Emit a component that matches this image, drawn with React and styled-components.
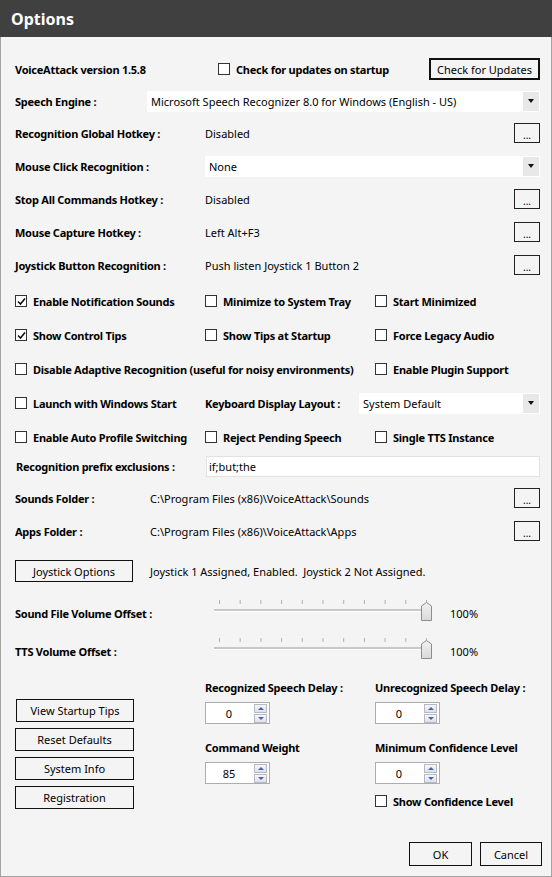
import styled, { createGlobalStyle } from "styled-components";

const GlobalStyle = createGlobalStyle`
  html, body {
    margin: 0;
    padding: 0;
    background: #f4f4f4;
  }
  body {
    font-family: "Noto Sans", "Open Sans", sans-serif;
    font-size: 11px;
    color: #000;
  }
`;

const Window = styled.div`
  width: 552px;
  height: 877px;
  display: flex;
  flex-direction: column;
  background: #f4f4f4;
`;

const TitleBar = styled.div`
  height: 37px;
  flex: none;
  background: #404040;
  color: #fff;
  font-weight: bold;
  font-size: 16px;
  padding-left: 11px;
  display: flex;
  align-items: center;
`;

const Body = styled.div`
  flex: 1;
  display: flex;
  flex-direction: column;
  border: 1px solid #a3a3a3;
  border-top: none;
  padding: 21px 11px 10px 14px;
`;

const Row = styled.div`
  display: flex;
  align-items: center;
  height: ${({ $h }) => $h || 22}px;
  margin-top: ${({ $mt }) => $mt || 0}px;
`;

const bold = `
  font-weight: bold;
  letter-spacing: -0.25px;
`;

const Label = styled.div`
  ${bold}
  width: ${({ $w }) => ($w ? `${$w}px` : "auto")};
  flex: none;
  white-space: nowrap;
`;

const Value = styled.div`
  flex: 1;
  white-space: nowrap;
`;

const Button = styled.button`
  font: inherit;
  height: ${({ $h }) => $h || 22}px;
  width: ${({ $w }) => ($w ? `${$w}px` : "auto")};
  padding: 0;
  white-space: nowrap;
  background: #f4f4f4;
  color: #000;
  border: ${({ $default }) => ($default ? "2px" : "1px")} solid #111;
  flex: none;
  cursor: default;
`;

const DotsButton = styled.button`
  width: 26px;
  height: 20px;
  flex: none;
  padding: 0;
  background: #f4f4f4;
  border: 1px solid #222;
  font: inherit;
  font-size: 10px;
  line-height: 22px;
  color: #000;
  display: flex;
  justify-content: center;
  align-items: flex-start;
  margin-left: auto;
`;

const Select = styled.div`
  flex: 1;
  height: 21px;
  background: #fff;
  display: flex;
  align-items: center;
`;

const SelectText = styled.span`
  flex: 1;
  padding-left: 4px;
  white-space: nowrap;
`;

const SelectArrow = styled.span`
  width: 16px;
  height: 19px;
  margin-right: 1px;
  background: #e8e8e8;
  display: flex;
  align-items: center;
  justify-content: center;
  &::after {
    content: "";
    border-left: 3px solid transparent;
    border-right: 3px solid transparent;
    border-top: 4px solid #111;
  }
`;

const Check = styled.label`
  display: flex;
  align-items: center;
  ${bold}
  white-space: nowrap;
  width: ${({ $w }) => ($w ? `${$w}px` : "auto")};
  flex: none;
`;

const Box = styled.span`
  width: 10px;
  height: 10px;
  border: 1px solid #333;
  background: #fff;
  margin-right: 6px;
  flex: none;
  display: flex;
  align-items: center;
  justify-content: center;
`;

const TextInput = styled.div`
  flex: 1;
  height: 19px;
  background: #fff;
  border: 1px solid #e2e2e2;
  display: flex;
  align-items: center;
  padding-left: 2px;
`;

const SliderWrap = styled.div`
  margin-left: ${({ $ml }) => $ml}px;
  display: flex;
  align-items: center;
`;

const Percent = styled.span`
  margin-left: 16px;
`;

const Bottom = styled.div`
  display: flex;
`;

const ButtonColumn = styled.div`
  width: 190px;
  padding-top: 35px;
  display: flex;
  flex-direction: column;
  align-items: flex-start;
  gap: 6px;
`;

const FieldColumn = styled.div`
  width: ${({ $w }) => $w}px;
  padding-top: 16px;
  display: flex;
  flex-direction: column;
  align-items: flex-start;
`;

const FieldLabel = styled.div`
  ${bold}
  height: 16px;
  line-height: 16px;
  white-space: nowrap;
  margin-top: ${({ $mt }) => $mt || 0}px;
`;

const Spinner = styled.div`
  width: 63px;
  height: 20px;
  margin-top: 6px;
  border: 1px solid #adadad;
  background: #fff;
  display: flex;
  align-items: center;
`;

const SpinValue = styled.span`
  flex: 1;
  text-align: center;
  padding-right: 2px;
`;

const SpinButtons = styled.div`
  width: 13px;
  margin-right: 2px;
  display: flex;
  flex-direction: column;
  gap: 1px;
`;

const SpinArrow = styled.span`
  height: 7px;
  border: 1px solid #b4b9c4;
  background: linear-gradient(#f6f7f9, #dde1e8);
  display: flex;
  align-items: center;
  justify-content: center;
  &::after {
    content: "";
    border-left: 3px solid transparent;
    border-right: 3px solid transparent;
    ${({ $down }) =>
      $down ? "border-top: 3px solid #4b63a6;" : "border-bottom: 3px solid #4b63a6;"}
  }
`;

const Footer = styled.div`
  margin-top: auto;
  margin-right: -2px;
  display: flex;
  justify-content: flex-end;
  gap: 8px;
`;

const CheckMark = () => (
  <svg width="9" height="9" viewBox="0 0 9 9">
    <path d="M1 4.5 L3.5 7 L8 1.5" fill="none" stroke="#111" strokeWidth="1.6" />
  </svg>
);

const CheckItem = ({ children, checked, w }) => (
  <Check $w={w}>
    <Box>{checked && <CheckMark />}</Box>
    {children}
  </Check>
);

const Slider = () => {
  const ticks = Array.from({ length: 11 }, (_, i) => 5.5 + i * 20.7);
  return (
    <svg width="220" height="26" viewBox="0 0 220 26">
      {ticks.map((x) => (
        <line key={x} x1={x} y1="0" x2={x} y2="4" stroke="#b0b0b0" strokeWidth="1" />
      ))}
      <rect x="0" y="9" width="212" height="2" fill="#c8c8c8" />
      <rect x="0" y="11" width="212" height="1" fill="#fff" />
      <defs>
        <linearGradient id="thumb" x1="0" x2="0" y1="0" y2="1">
          <stop offset="0" stopColor="#f2f2f2" />
          <stop offset="1" stopColor="#d9d9d9" />
        </linearGradient>
      </defs>
      <path
        d="M207.5 20.5 V6 L212.5 2.5 L217.5 6 V20.5 Z"
        fill="url(#thumb)"
        stroke="#8c8c8c"
        strokeWidth="1"
        strokeLinejoin="round"
      />
    </svg>
  );
};

const Spin = ({ value }) => (
  <Spinner>
    <SpinValue>{value}</SpinValue>
    <SpinButtons>
      <SpinArrow />
      <SpinArrow $down />
    </SpinButtons>
  </Spinner>
);

const App = () => (
  <Window>
    <GlobalStyle />
    <TitleBar>Options</TitleBar>
    <Body>
      <Row>
        <Label $w={203}>VoiceAttack version 1.5.8</Label>
        <Check>
          <Box />
          Check for updates on startup
        </Check>
        <Button $default $w={111} style={{ marginLeft: "auto" }}>
          Check for Updates
        </Button>
      </Row>

      <Row $mt={10}>
        <Label $w={132}>Speech Engine :</Label>
        <Select>
          <SelectText>Microsoft Speech Recognizer 8.0 for Windows (English - US)</SelectText>
          <SelectArrow />
        </Select>
      </Row>

      <Row $mt={10}>
        <Label $w={190}>Recognition Global Hotkey :</Label>
        <Value>Disabled</Value>
        <DotsButton>...</DotsButton>
      </Row>

      <Row $mt={11}>
        <Label $w={190}>Mouse Click Recognition :</Label>
        <Select>
          <SelectText>None</SelectText>
          <SelectArrow />
        </Select>
      </Row>

      <Row $mt={11}>
        <Label $w={190}>Stop All Commands Hotkey :</Label>
        <Value>Disabled</Value>
        <DotsButton>...</DotsButton>
      </Row>

      <Row $mt={11}>
        <Label $w={190}>Mouse Capture Hotkey :</Label>
        <Value>Left Alt+F3</Value>
        <DotsButton>...</DotsButton>
      </Row>

      <Row $mt={11}>
        <Label $w={190}>Joystick Button Recognition :</Label>
        <Value>Push listen Joystick 1 Button 2</Value>
        <DotsButton>...</DotsButton>
      </Row>

      <Row $mt={14}>
        <CheckItem w={190} checked>Enable Notification Sounds</CheckItem>
        <CheckItem w={170}>Minimize to System Tray</CheckItem>
        <CheckItem>Start Minimized</CheckItem>
      </Row>

      <Row $mt={12}>
        <CheckItem w={190} checked>Show Control Tips</CheckItem>
        <CheckItem w={170}>Show Tips at Startup</CheckItem>
        <CheckItem>Force Legacy Audio</CheckItem>
      </Row>

      <Row $mt={12}>
        <CheckItem w={360}>Disable Adaptive Recognition (useful for noisy environments)</CheckItem>
        <CheckItem>Enable Plugin Support</CheckItem>
      </Row>

      <Row $mt={12}>
        <CheckItem w={190}>Launch with Windows Start</CheckItem>
        <Label $w={154}>Keyboard Display Layout :</Label>
        <Select>
          <SelectText>System Default</SelectText>
          <SelectArrow />
        </Select>
      </Row>

      <Row $mt={12}>
        <CheckItem w={190}>Enable Auto Profile Switching</CheckItem>
        <CheckItem w={170}>Reject Pending Speech</CheckItem>
        <CheckItem>Single TTS Instance</CheckItem>
      </Row>

      <Row $mt={7}>
        <Label $w={190} style={{ paddingLeft: 1 }}>Recognition prefix exclusions :</Label>
        <TextInput>if;but;the</TextInput>
      </Row>

      <Row $mt={10}>
        <Label $w={135}>Sounds Folder :</Label>
        <Value>C:\Program Files (x86)\VoiceAttack\Sounds</Value>
        <DotsButton>...</DotsButton>
      </Row>

      <Row $mt={11}>
        <Label $w={135}>Apps Folder :</Label>
        <Value>C:\Program Files (x86)\VoiceAttack\Apps</Value>
        <DotsButton>...</DotsButton>
      </Row>

      <Row $mt={18}>
        <Button $w={118}>Joystick Options</Button>
        <Value style={{ marginLeft: 17 }}>
          Joystick 1 Assigned, Enabled.&nbsp; Joystick 2 Not Assigned.
        </Value>
      </Row>

      <Row $mt={18} $h={26}>
        <Label $w={190}>Sound File Volume Offset :</Label>
        <SliderWrap $ml={9}>
          <Slider />
          <Percent>100%</Percent>
        </SliderWrap>
      </Row>

      <Row $mt={12} $h={26}>
        <Label $w={190}>TTS Volume Offset :</Label>
        <SliderWrap $ml={9}>
          <Slider />
          <Percent>100%</Percent>
        </SliderWrap>
      </Row>

      <Bottom>
        <ButtonColumn>
          <Button $w={118} $h={23} style={{ marginLeft: 1 }}>View Startup Tips</Button>
          <Button $w={119} $h={23}>Reset Defaults</Button>
          <Button $w={119} $h={23}>System Info</Button>
          <Button $w={119} $h={23}>Registration</Button>
        </ButtonColumn>
        <FieldColumn $w={170}>
          <FieldLabel>Recognized Speech Delay :</FieldLabel>
          <Spin value="0" />
          <FieldLabel $mt={16}>Command Weight</FieldLabel>
          <Spin value="85" />
        </FieldColumn>
        <FieldColumn $w={160}>
          <FieldLabel>Unrecognized Speech Delay :</FieldLabel>
          <Spin value="0" />
          <FieldLabel $mt={16}>Minimum Confidence Level</FieldLabel>
          <Spin value="0" />
          <Check style={{ marginTop: 9, height: 16 }}>
            <Box />
            Show Confidence Level
          </Check>
        </FieldColumn>
      </Bottom>

      <Footer>
        <Button $w={63} $h={24}>OK</Button>
        <Button $w={62} $h={24}>Cancel</Button>
      </Footer>
    </Body>
  </Window>
);

export default App;
